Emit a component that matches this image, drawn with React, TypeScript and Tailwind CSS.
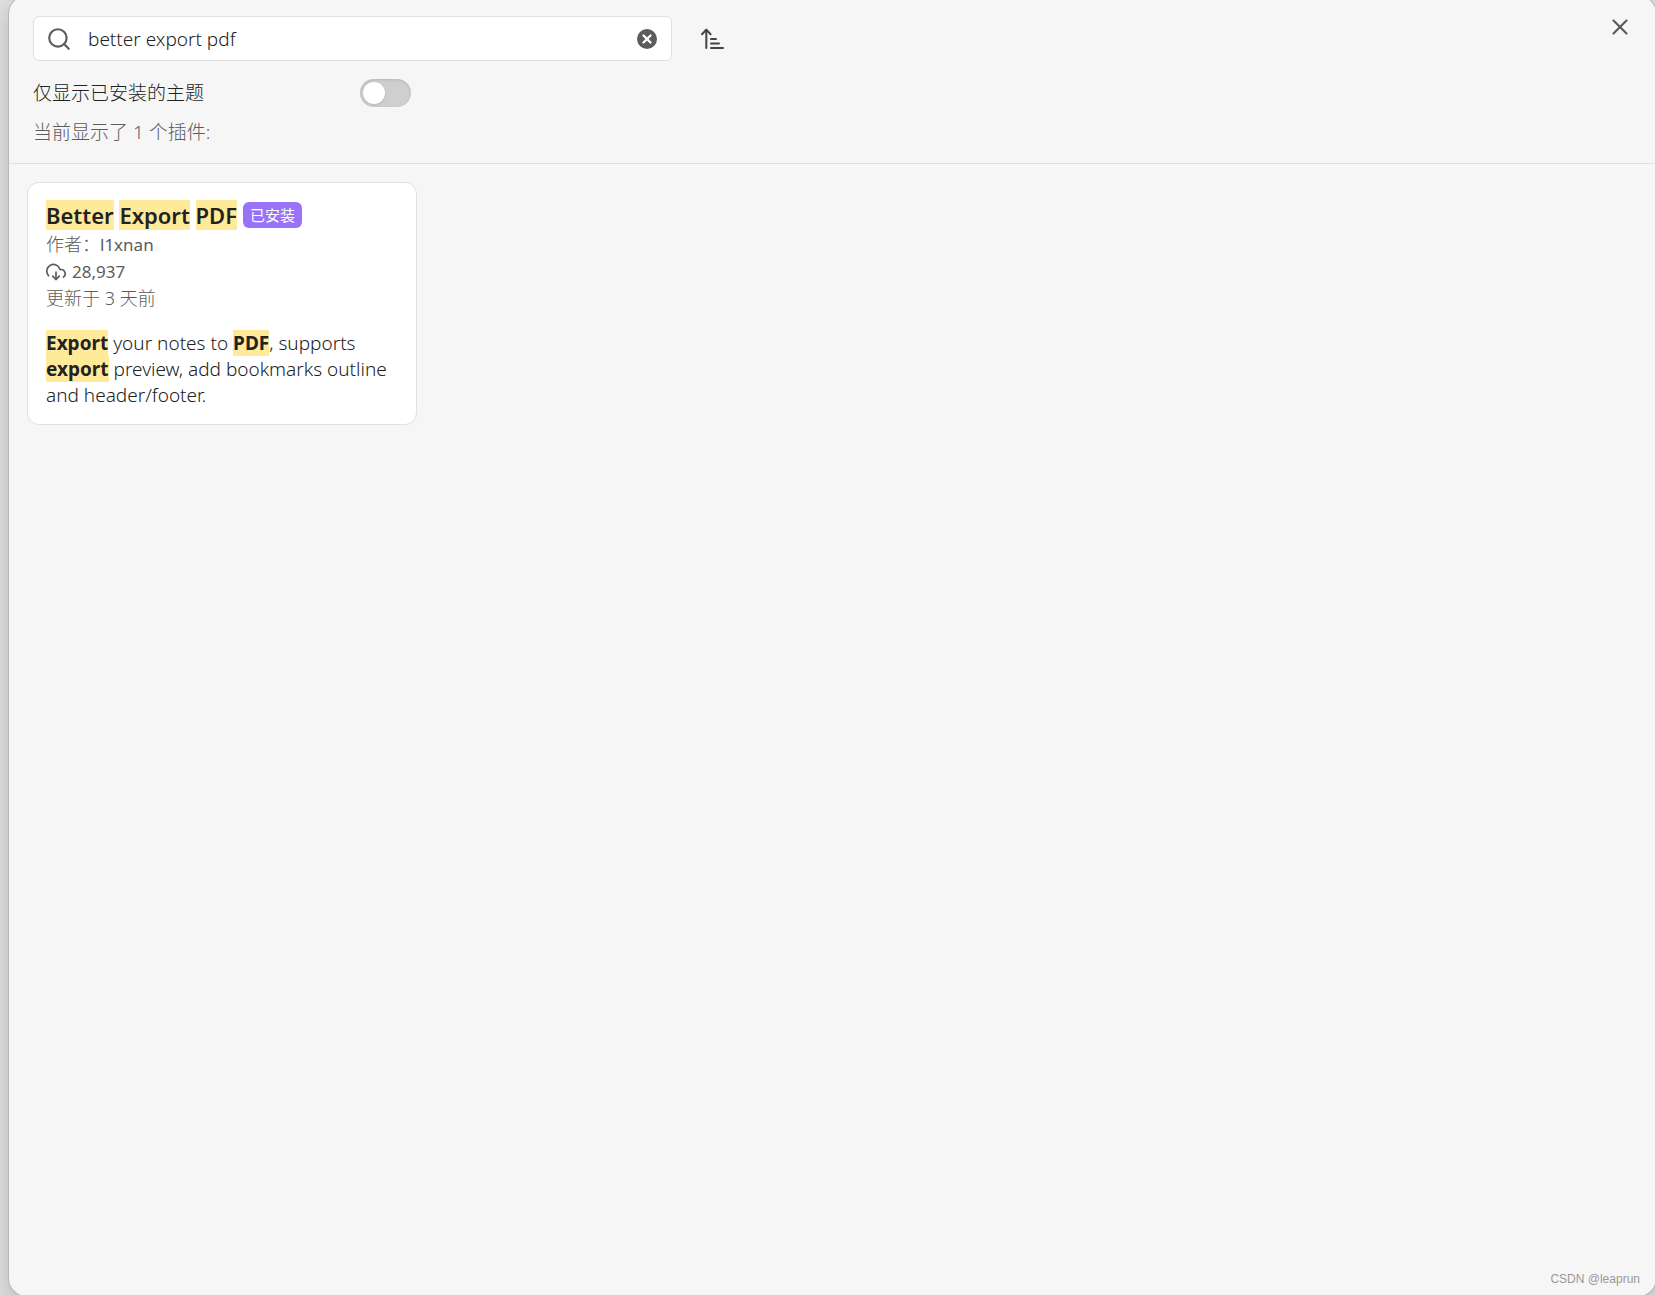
import React, { useState } from 'react';
import { Search, X } from 'lucide-react';

interface Plugin {
  name: string;
  author: string;
  downloads: number;
  updated: string;
  description: string;
}

const plugins: Plugin[] = [
  {
    name: 'Better Export PDF',
    author: 'l1xnan',
    downloads: 28937,
    updated: '更新于 3 天前',
    description: 'Export your notes to PDF, supports export preview, add bookmarks outline and header/footer.',
  },
];

// 高亮搜索词
const Highlight: React.FC<{ text: string; query: string }> = ({ text, query }) => {
  const words = query.toLowerCase().split(/\s+/).filter(Boolean);
  const parts = text.split(/(\w+)/);

  return (
    <>
      {parts.map((part, i) =>
        words.includes(part.toLowerCase()) ? (
          <mark key={i} className="bg-[#ffea99] text-[#222222]">
            {part}
          </mark>
        ) : (
          <span key={i}>{part}</span>
        )
      )}
    </>
  );
};

const DownloadIcon: React.FC = () => (
  <svg
    className="h-5 w-5"
    viewBox="0 0 24 24"
    fill="none"
    stroke="currentColor"
    strokeWidth="2"
    strokeLinecap="round"
    strokeLinejoin="round"
    aria-hidden="true"
  >
    <path d="M8 17l4 4 4-4" />
    <path d="M12 12v9" />
    <path d="M20.88 18.09A5 5 0 0 0 18 9h-1.26A8 8 0 1 0 3 16.29" />
  </svg>
);

const SortIcon: React.FC = () => (
  <svg
    className="h-6 w-6"
    viewBox="0 0 24 24"
    fill="none"
    stroke="currentColor"
    strokeWidth="2"
    strokeLinecap="round"
    strokeLinejoin="round"
    aria-hidden="true"
  >
    <path d="M6.3 21V2.8" />
    <path d="M2 7.2l4.3-4.4 4.3 4.4" />
    <path d="M11 12h5" />
    <path d="M11 16.5h8" />
    <path d="M11 21h12" />
  </svg>
);

const PluginCard: React.FC<{ plugin: Plugin; query: string }> = ({ plugin, query }) => (
  <article className="w-full max-w-[390px] rounded-xl border border-[#e0e0e0] bg-white px-[18px] py-4">
    <h2 className="flex items-center gap-1.5 text-[22px] leading-8 font-semibold text-[#222222]">
      <span>
        <Highlight text={plugin.name} query={query} />
      </span>
      <span className="rounded-md bg-[#9873f7] px-[7px] text-[15px] leading-[26px] font-normal text-white">
        已安装
      </span>
    </h2>
    <div className="text-lg leading-[27px] font-light text-[#5c5c5c]">
      <p>
        作者：<span className="text-[17px] font-normal">{plugin.author}</span>
      </p>
      <p className="flex items-center gap-1.5 text-[17px] font-normal">
        <DownloadIcon />
        {plugin.downloads.toLocaleString('en-US')}
      </p>
      <p>{plugin.updated}</p>
    </div>
    <p className="mt-[18px] text-[19px] leading-[26px] font-light text-[#222222] [&>mark]:font-bold">
      <Highlight text={plugin.description} query={query} />
    </p>
  </article>
);

const App: React.FC = () => {
  const [query, setQuery] = useState('better export pdf');
  const [installedOnly, setInstalledOnly] = useState(false);

  return (
    <div className="flex min-h-screen overflow-hidden bg-[#e0e0e0] pl-[9px] font-['Noto_Sans','Noto_Sans_CJK_SC',sans-serif]">
      <main className="relative -mt-1 -mr-px -mb-px flex-1 rounded-[18px] bg-[#f6f6f6] shadow-[0_0_0_1px_#b8b8b8,0_8px_24px_rgba(0,0,0,0.2)]">
        <header className="border-b border-[#e0e0e0] px-6 pt-5 pb-4">
          <div className="flex items-center gap-6">
            <div className="flex h-[45px] w-full max-w-[639px] items-center rounded-md border border-[#e0e0e0] bg-white pr-3.5 pl-3">
              <Search className="h-[26px] w-[26px] shrink-0 text-[#5c5c5c]" strokeWidth={2} />
              <input
                type="text"
                aria-label="搜索插件"
                value={query}
                onChange={(e) => setQuery(e.target.value)}
                className="ml-4 min-w-0 flex-1 bg-transparent pt-0.5 text-[19px] font-light text-[#222222] outline-none"
              />
              <button
                type="button"
                aria-label="清除"
                onClick={() => setQuery('')}
                className="flex h-5 w-5 items-center justify-center rounded-full bg-[#5c5c5c] text-white"
              >
                <X className="h-3.5 w-3.5" strokeWidth={4} />
              </button>
            </div>
            <button type="button" aria-label="排序" className="p-1 text-[#444444]">
              <SortIcon />
            </button>
          </div>
          <label className="mt-[18px] flex h-7 w-[378px] items-center justify-between text-[19px] font-light text-[#222222]">
            仅显示已安装的主题
            <input
              type="checkbox"
              role="switch"
              checked={installedOnly}
              onChange={(e) => setInstalledOnly(e.target.checked)}
              className="h-7 w-[51px] appearance-none rounded-full bg-[#cfcfcf] p-[3px] shadow-[inset_0_1px_3px_rgba(0,0,0,0.12)] before:block before:h-[22px] before:w-[22px] before:rounded-full before:bg-white before:shadow-sm checked:bg-[#9873f7] checked:before:translate-x-[23px]"
            />
          </label>
          <p className="mt-2.5 text-[19px] leading-[30px] font-light text-[#5c5c5c]">当前显示了 1 个插件:</p>
        </header>

        <section className="px-[18px] pt-[18px]">
          {plugins.map((plugin) => (
            <PluginCard key={plugin.name} plugin={plugin} query={query} />
          ))}
        </section>

        <button type="button" aria-label="关闭" className="absolute top-[18px] right-[23px] text-[#5c5c5c]">
          <X className="h-[26px] w-[26px]" strokeWidth={2} />
        </button>
        <p className="absolute right-4 bottom-[9px] font-['Liberation_Sans',sans-serif] text-xs text-[#999999]">
          CSDN @leaprun
        </p>
      </main>
    </div>
  );
};

export default App;
